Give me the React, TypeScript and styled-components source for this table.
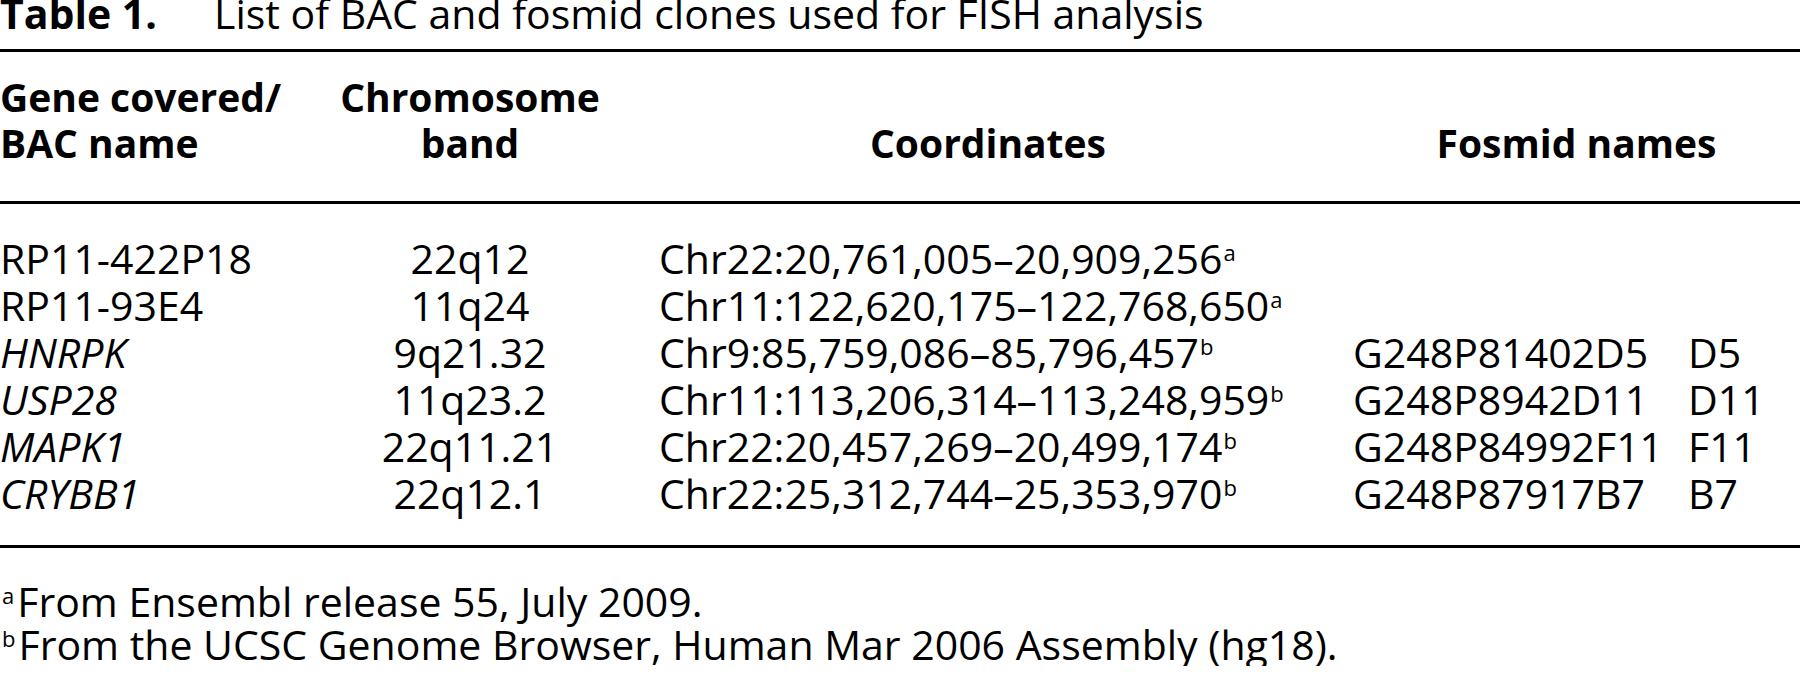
import styled, { createGlobalStyle } from 'styled-components'

const GlobalStyle = createGlobalStyle`
  body {
    margin: 0;
    background: #fff;
    color: #000;
    font-family: 'Open Sans', 'Noto Sans', sans-serif;
  }
`

const COLUMNS = '340px 260px 753px 335px 1fr'

const Page = styled.div`
  width: 1800px;
`

const Caption = styled.div`
  display: flex;
  gap: 57px;
  font-size: 41px;
  line-height: 26px;
  white-space: nowrap;
`

const CaptionLabel = styled.span`
  font-weight: 700;
`

const Table = styled.div`
  margin-top: 23px;
  border-top: 3px solid #000;
  border-bottom: 3px solid #000;
`

const Head = styled.div`
  display: grid;
  grid-template-columns: ${COLUMNS};
  align-items: end;
  padding: 22px 0 35px;
  border-bottom: 3px solid #000;

  font-size: 39px;
  font-weight: 700;
  line-height: 46px;
  white-space: nowrap;
`

const Body = styled.div`
  padding: 31px 0 28px;
`

const Row = styled.div`
  display: grid;
  grid-template-columns: ${COLUMNS};

  font-size: 41px;
  line-height: 47px;
  white-space: nowrap;
`

const Cell = styled.div<{ $align?: 'left' | 'center'; $coords?: boolean; $span?: number }>`
  text-align: ${(p) => p.$align ?? 'left'};
  padding: ${(p) => (p.$coords ? '0 36px 0 59px' : '0')};
  grid-column: ${(p) => (p.$span ? `span ${p.$span}` : 'auto')};
`

const Gene = styled.span`
  font-style: italic;
`

const Note = styled.sup`
  font-size: 22px;
  line-height: 0;
  vertical-align: 13px;
  margin-left: 1px;
`

const Footnotes = styled.div`
  margin-top: 32px;
  font-size: 41px;
  line-height: 43px;
  white-space: nowrap;
`

const FootMark = styled.sup`
  font-size: 22px;
  line-height: 0;
  vertical-align: 13px;
  margin: 0 3px 0 2px;
`

type Clone = {
  name: string
  italic?: boolean
  band: string
  coords: string
  note: 'a' | 'b'
  fosmid?: string
  short?: string
}

const clones: Clone[] = [
  { name: 'RP11-422P18', band: '22q12', coords: 'Chr22:20,761,005–20,909,256', note: 'a' },
  { name: 'RP11-93E4', band: '11q24', coords: 'Chr11:122,620,175–122,768,650', note: 'a' },
  {
    name: 'HNRPK',
    italic: true,
    band: '9q21.32',
    coords: 'Chr9:85,759,086–85,796,457',
    note: 'b',
    fosmid: 'G248P81402D5',
    short: 'D5',
  },
  {
    name: 'USP28',
    italic: true,
    band: '11q23.2',
    coords: 'Chr11:113,206,314–113,248,959',
    note: 'b',
    fosmid: 'G248P8942D11',
    short: 'D11',
  },
  {
    name: 'MAPK1',
    italic: true,
    band: '22q11.21',
    coords: 'Chr22:20,457,269–20,499,174',
    note: 'b',
    fosmid: 'G248P84992F11',
    short: 'F11',
  },
  {
    name: 'CRYBB1',
    italic: true,
    band: '22q12.1',
    coords: 'Chr22:25,312,744–25,353,970',
    note: 'b',
    fosmid: 'G248P87917B7',
    short: 'B7',
  },
]

const App = () => {
  return (
    <Page>
      <GlobalStyle />
      <Caption>
        <CaptionLabel>Table 1.</CaptionLabel>
        <span>List of BAC and fosmid clones used for FISH analysis</span>
      </Caption>

      <Table>
        <Head>
          <Cell>
            Gene covered/
            <br />
            BAC name
          </Cell>
          <Cell $align="center">
            Chromosome
            <br />
            band
          </Cell>
          <Cell $align="center" $coords>
            Coordinates
          </Cell>
          <Cell $align="center" $span={2}>
            Fosmid names
          </Cell>
        </Head>

        <Body>
          {clones.map((c) => (
            <Row key={c.name}>
              <Cell>{c.italic ? <Gene>{c.name}</Gene> : c.name}</Cell>
              <Cell $align="center">{c.band}</Cell>
              <Cell $coords>
                {c.coords}
                <Note>{c.note}</Note>
              </Cell>
              <Cell>{c.fosmid}</Cell>
              <Cell>{c.short}</Cell>
            </Row>
          ))}
        </Body>
      </Table>

      <Footnotes>
        <div>
          <FootMark>a</FootMark>From Ensembl release 55, July 2009.
        </div>
        <div>
          <FootMark>b</FootMark>From the UCSC Genome Browser, Human Mar 2006 Assembly (hg18).
        </div>
      </Footnotes>
    </Page>
  )
}

export default App
